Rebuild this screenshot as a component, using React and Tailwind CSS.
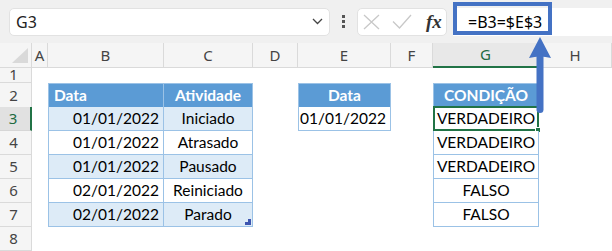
const grid = "grid grid-cols-[32px_16px_116px_89px_45px_93px_42px_106px_1fr]";
const cellFont = { fontFamily: "Lato, 'Noto Sans', sans-serif" };

function RowHead({ n, selected }) {
  return (
    <div
      className={
        "flex items-center justify-center pr-[4px] text-[15px] leading-none " +
        (selected
          ? "border-b border-b-[#d6d6d6] border-r-2 border-r-[#217346] bg-[#e1e1e1] text-[#1e6b41]"
          : "border-b border-r border-[#dadada] bg-[#f5f5f5] text-[#444]")
      }
    >
      {n}
    </div>
  );
}

function Empty() {
  return <div />;
}

function Hdr({ children, className = "" }) {
  return (
    <div
      style={cellFont}
      className={
        "flex items-center border-b border-r border-[#9bc2e6] bg-[#5b9bd5] text-[15.5px] font-bold text-white " +
        className
      }
    >
      {children}
    </div>
  );
}

function Td({ children, className = "", stripe }) {
  return (
    <div
      style={cellFont}
      className={
        "flex items-center border-b border-r border-[#9bc2e6] text-[15.5px] text-black " +
        (stripe ? "bg-[#ddebf7] " : "bg-white ") +
        className
      }
    >
      {children}
    </div>
  );
}

const data = [
  { d: "01/01/2022", a: "Iniciado", g: "VERDADEIRO" },
  { d: "01/01/2022", a: "Atrasado", g: "VERDADEIRO" },
  { d: "01/01/2022", a: "Pausado", g: "VERDADEIRO" },
  { d: "02/01/2022", a: "Reiniciado", g: "FALSO" },
  { d: "02/01/2022", a: "Parado", g: "FALSO" },
];

export default function App() {
  const letters = ["A", "B", "C", "D", "E", "F", "G", "H"];
  return (
    <div
      className="relative h-[251px] w-[612px] overflow-hidden bg-white"
      style={{ fontFamily: "'Noto Sans', 'Open Sans', sans-serif" }}
    >
      {/* formula bar */}
      <div className="flex h-[43px] items-center bg-[#f0f0f0] pl-[9px]">
        <div className="flex h-[28px] w-[321px] items-center justify-between rounded-[5px] border border-[#e2e2e2] bg-white pl-[6px] pr-[6px]">
          <span className="text-[16px] text-[#222]">G3</span>
          <svg width="11" height="7" viewBox="0 0 11 7" fill="none">
            <path d="M1 1l4.5 4.5L10 1" stroke="#444" strokeWidth="1.3" />
          </svg>
        </div>
        <div className="flex w-[27px] flex-col items-center gap-[2px]">
          <span className="h-[3px] w-[3px] bg-[#555]" />
          <span className="h-[3px] w-[3px] bg-[#555]" />
          <span className="h-[3px] w-[3px] bg-[#555]" />
        </div>
        <div className="flex h-[28px] w-[90px] items-center rounded-[5px] border border-[#e2e2e2] bg-white pl-[5px]">
          <svg width="17" height="16" viewBox="0 0 17 16" fill="none">
            <path d="M1 1l15 14M16 1L1 15" stroke="#c8c8c8" strokeWidth="1.3" />
          </svg>
          <svg className="ml-[12px]" width="20" height="15" viewBox="0 0 20 15" fill="none">
            <path d="M1 7.5l6.5 6.5L19 1" stroke="#c8c8c8" strokeWidth="1.3" />
          </svg>
          <span
            className="ml-[14px] text-[19px] font-bold italic leading-none text-[#333]"
            style={{ fontFamily: "'Liberation Serif', serif" }}
          >
            fx
          </span>
        </div>
        <div className="ml-[6px] flex h-[28px] flex-1 items-center bg-white pl-[15px] text-[16px] text-black">
          =B3=$E$3
        </div>
      </div>

      {/* column headers */}
      <div className={grid + " h-[24px] bg-[#f5f5f5]"}>
        <div className="relative border-b border-r border-[#dadada]">
          <svg className="absolute left-0 top-0" width="32" height="23" viewBox="0 0 32 23">
            <polygon points="12,20 28,20 28,5" fill="#d9d9d9" />
          </svg>
        </div>
        {letters.map((l) => (
          <div
            key={l}
            className={
              "flex items-center justify-center text-[15px] " +
              (l === "G"
                ? "border-b-2 border-r border-b-[#217346] border-r-[#dadada] bg-[#e8e8e8] text-[#1e6b41]"
                : "border-b border-r border-[#dadada] text-[#444]")
            }
          >
            {l}
          </div>
        ))}
      </div>

      {/* row 1 */}
      <div className={grid + " h-[16px]"}>
        <RowHead n={1} />
      </div>

      {/* row 2 */}
      <div className={grid + " h-[24px]"}>
        <RowHead n={2} />
        <Empty />
        <Hdr className="border-l border-t pl-[5px]">Data</Hdr>
        <Hdr className="border-t justify-center">Atividade</Hdr>
        <Empty />
        <Hdr className="border-l border-t justify-center">Data</Hdr>
        <Empty />
        <Hdr className="border-l border-t justify-center">CONDIÇÃO</Hdr>
      </div>

      {data.map((r, i) => (
        <div key={i} className={grid + " h-[24px]"}>
          <RowHead n={i + 3} selected={i === 0} />
          <Empty />
          <Td stripe={i % 2 === 0} className="border-l justify-end pr-[4px]">
            {r.d}
          </Td>
          <Td stripe={i % 2 === 0} className="relative justify-center">
            {r.a}
            {i === 4 && (
              <svg className="absolute bottom-[1px] right-[1px]" width="6" height="6" viewBox="0 0 6 6">
                <polygon points="6,0 6,6 0,6 0,3 3,3 3,0" fill="#3d55b0" />
              </svg>
            )}
          </Td>
          <Empty />
          {i === 0 ? (
            <Td className="border-l justify-end pr-[4px]">{r.d}</Td>
          ) : (
            <Empty />
          )}
          <Empty />
          <Td className="relative border-l justify-center">
            {r.g}
            {i === 0 && (
              <>
                <div className="absolute inset-[-1px] border-2 border-[#217346]" />
                <div className="absolute bottom-[-3px] right-[-3px] h-[6px] w-[6px] border border-white bg-[#217346]" />
              </>
            )}
          </Td>
        </div>
      ))}

      {/* row 8 */}
      <div className={grid + " h-[24px]"}>
        <RowHead n={8} />
      </div>

      {/* annotation: highlight box + arrow */}
      <div className="absolute left-[453px] top-[2px] h-[33px] w-[99px] border-4 border-[#4472c4]" />
      <svg className="absolute left-[526px] top-[34px]" width="28" height="82" viewBox="0 0 28 82">
        <path d="M14 3L25 24Q14 21 3 24Z" fill="#4472c4" />
        <rect x="10.5" y="20" width="7" height="59" rx="3.5" fill="#4472c4" />
      </svg>
    </div>
  );
}
